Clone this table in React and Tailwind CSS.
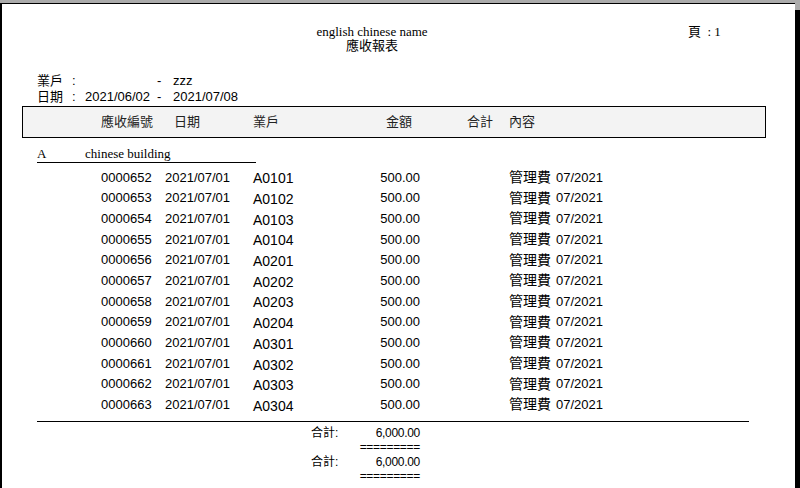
const sans = "font-['Liberation_Sans','Noto_Sans_CJK_TC',sans-serif]";
const serif = "font-['Liberation_Serif','Noto_Sans_CJK_TC',serif]";

const rows = [
  ["0000652", "A0101"],
  ["0000653", "A0102"],
  ["0000654", "A0103"],
  ["0000655", "A0104"],
  ["0000656", "A0201"],
  ["0000657", "A0202"],
  ["0000658", "A0203"],
  ["0000659", "A0204"],
  ["0000660", "A0301"],
  ["0000661", "A0302"],
  ["0000662", "A0303"],
  ["0000663", "A0304"],
];

function ReportRow({ no, code }) {
  return (
    <div className="flex items-center h-[20.7px] pl-[99px] text-[13px] text-black">
      <div className="w-[64px]">{no}</div>
      <div className="w-[88px]">2021/07/01</div>
      <div className="w-[100px] text-[14px] mt-[3px]">{code}</div>
      <div className="w-[67px] text-right">500.00</div>
      <div className="w-[89px]" />
      <div className="flex items-center gap-[5px]">
        <span className="text-[14px]">管理費</span>
        <span>07/2021</span>
      </div>
    </div>
  );
}

function SummaryRow({ label, value }) {
  return (
    <div className="flex h-[14.5px] items-center pl-[309px] text-[12px] leading-[14px]">
      <div className="w-[48px]">{label}</div>
      <div className="w-[61px] text-right tracking-[-0.3px]">{value}</div>
    </div>
  );
}

export default function App() {
  return (
    <div className={`w-[800px] h-[488px] bg-[#ababab] pt-[3px] overflow-hidden ${sans}`}>
      <div className="w-[795px] h-[490px] bg-white border-t border-l-2 border-black shadow-[5px_7px_0_0_#000]">
        {/* page title */}
        <div className={`flex pt-[21px] text-[13px] leading-[14px] ${serif}`}>
          <div className="ml-[270px] w-[200px] text-center">
            <div>english chinese name</div>
            <div>應收報表</div>
          </div>
          <div className="ml-[216px]">頁 &nbsp;: 1</div>
        </div>

        {/* filter info */}
        <div className="mt-[20px] pl-[35px] text-[13px] leading-[16px]">
          <div className="flex">
            <div className="w-[35px]">業戶</div>
            <div className="w-[13px]">:</div>
            <div className="w-[72px]" />
            <div className="w-[16px]">-</div>
            <div>zzz</div>
          </div>
          <div className="flex">
            <div className="w-[35px]">日期</div>
            <div className="w-[13px]">:</div>
            <div className="w-[72px]">2021/06/02</div>
            <div className="w-[16px]">-</div>
            <div>2021/07/08</div>
          </div>
        </div>

        {/* column header */}
        <div className="mt-[1px] ml-[20px] w-[744px] h-[32px] border border-black bg-[#f3f3f3] flex items-center pl-[78px] text-[13px] text-[#222]">
          <div className="w-[73px]">應收編號</div>
          <div className="w-[79px]">日期</div>
          <div className="w-[133px]">業戶</div>
          <div className="w-[81px]">金額</div>
          <div className="w-[42px]">合計</div>
          <div>內容</div>
        </div>

        {/* group */}
        <div className={`mt-[7px] ml-[35px] w-[219px] flex border-b border-black text-[13px] leading-[17px] ${serif}`}>
          <div className="w-[48px]">A</div>
          <div>chinese building</div>
        </div>

        <div className="mt-[4px]">
          {rows.map(([no, code]) => (
            <ReportRow key={no} no={no} code={code} />
          ))}
        </div>

        <div className="mt-[6px] ml-[35px] w-[712px] border-t border-black" />

        <div className="mt-[3px]">
          <SummaryRow label="合計:" value="6,000.00" />
          <SummaryRow label="" value="=========" />
          <SummaryRow label="合計:" value="6,000.00" />
          <SummaryRow label="" value="=========" />
        </div>
      </div>
    </div>
  );
}
